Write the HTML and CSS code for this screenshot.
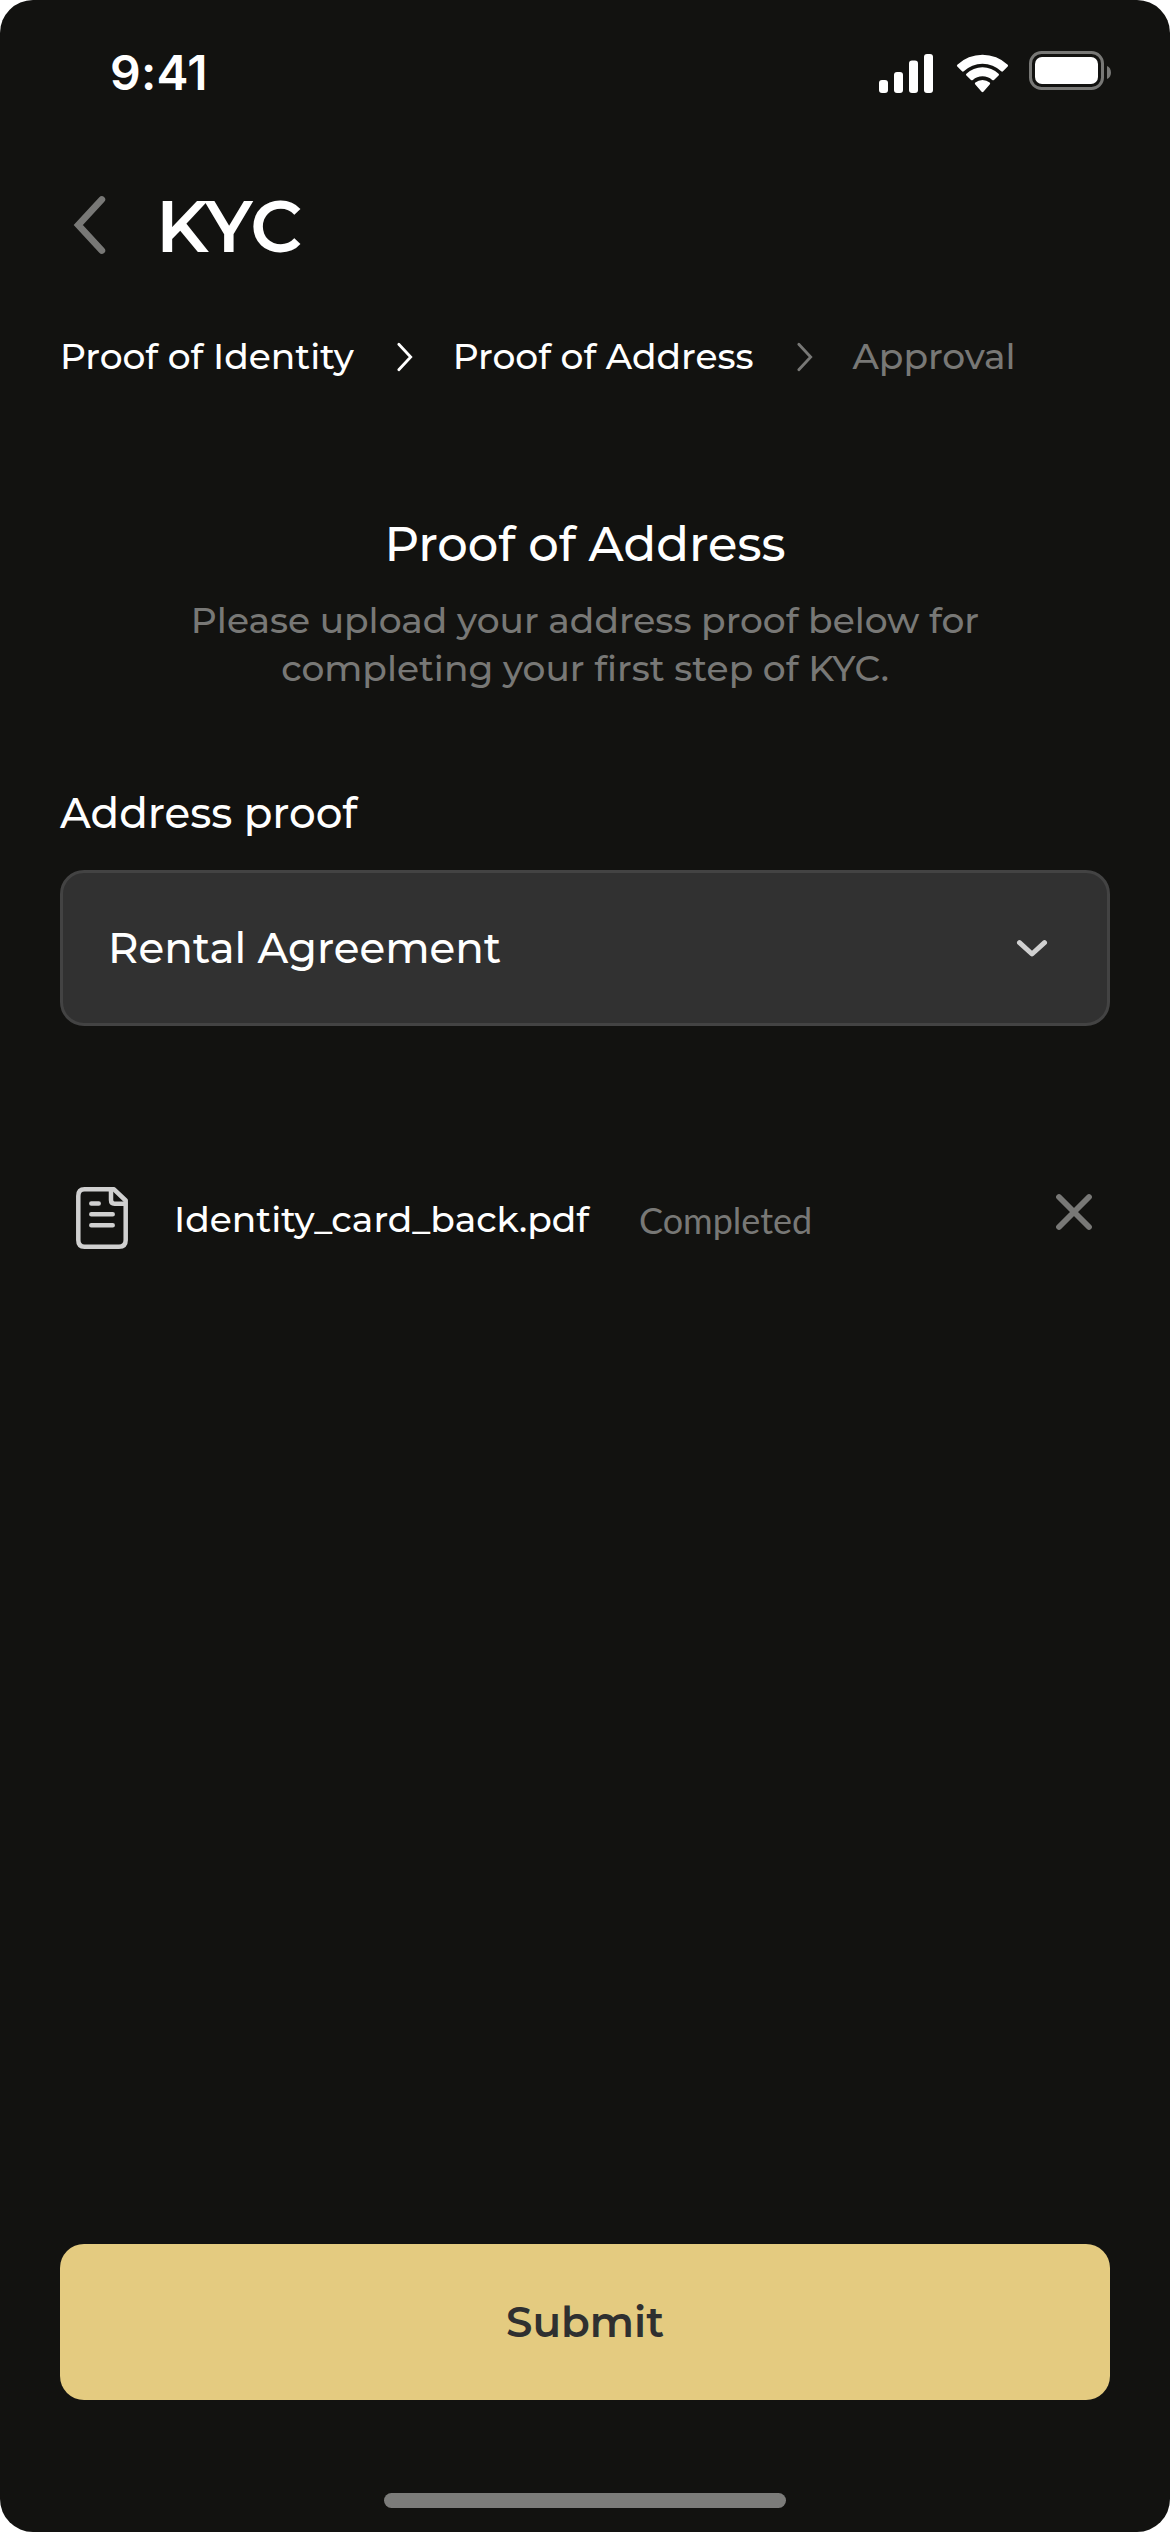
FILE: index.html
```html
<!DOCTYPE html>
<html lang="en">
<head>
<meta charset="utf-8">
<title>KYC</title>
<link rel="stylesheet" href="styles.css">
</head>
<body>
<div class="screen">
  <header class="status-bar">
    <span class="time">9:41</span>
    <svg class="status-icons" width="234" height="42" viewBox="878 50 234 42">
      <g fill="#fff">
        <rect x="879" y="80" width="9" height="13" rx="3"/>
        <rect x="894" y="72" width="9" height="21" rx="3"/>
        <rect x="909" y="60.500" width="9" height="32.500" rx="3"/>
        <rect x="924" y="54" width="9" height="39" rx="3"/>
        <rect x="1035" y="57" width="63" height="27" rx="7"/>
        <path d="M957.300 64.800a36.500 36.500 0 0 1 50.400 0q.9.900 0 1.800l-4.700 4.700q-.9.800-1.800 0a27 27 0 0 0-37.400 0q-.9.800-1.800 0l-4.700-4.700q-.9-.9 0-1.800z"/>
        <path d="M966.400 73.700a23.500 23.500 0 0 1 32.200 0q.9.900 0 1.800l-4.600 4.400q-.9.800-1.800 0a14.500 14.500 0 0 0-19.400 0q-.9.800-1.800 0l-4.600-4.400q-.9-.9 0-1.800z"/>
        <path d="M975.300 82.500a11.200 11.200 0 0 1 14.400 0q1 .9 0 1.900l-6.300 7.400q-.9.900-1.800 0l-6.300-7.400q-1-1 0-1.900z"/>
      </g>
      <rect x="1030.500" y="52.500" width="72" height="36" rx="11" fill="none" stroke="#787876" stroke-width="3"/>
      <path d="M1107 66v13c5.300-2 5.300-11 0-13z" fill="#787876"/>
    </svg>
  </header>

  <div class="title-bar">
    <svg class="back" width="32" height="60" viewBox="0 0 32 60"><path d="M28.800 3.500 5.300 29 28.800 54.500" fill="none" stroke="#787876" stroke-width="6.800" stroke-linecap="round"/></svg>
    <h1 class="title">KYC</h1>
  </div>

  <nav class="steps">
    <span class="step">Proof of Identity</span>
    <svg class="step-arrow" width="16" height="30" viewBox="0 0 16 30"><path d="M1.800 2.300 13.700 15 1.800 27.700"/></svg>
    <span class="step">Proof of Address</span>
    <svg class="step-arrow pending" width="16" height="30" viewBox="0 0 16 30"><path d="M1.800 2.300 13.700 15 1.800 27.700"/></svg>
    <span class="step pending">Approval</span>
  </nav>

  <main class="content">
    <section class="intro">
      <h2>Proof of Address</h2>
      <p>Please upload your address proof below for completing your first step of KYC.</p>
    </section>

    <div class="field">
      <span class="label">Address proof</span>
      <div class="select">
        <span>Rental Agreement</span>
        <svg width="32" height="20" viewBox="0 0 32 20"><path d="M3.500 4.700 16 16 28.500 4.700" fill="none" stroke="#d0d0d0" stroke-width="5" stroke-linecap="round" stroke-linejoin="round"/></svg>
      </div>
    </div>

    <div class="file">
      <svg class="file-icon" width="52" height="62" viewBox="0 0 52 62" fill="none" stroke="#d0d0d0" stroke-width="4.500" stroke-linecap="round" stroke-linejoin="round">
        <path d="M8.500 2.300H38L49.700 13.500V53q0 6.700-6.700 6.700H8.500q-6.200 0-6.200-6.700V9q0-6.700 6.200-6.700z"/>
        <path d="M35 3.500V13q0 3.700 3.500 3.700H49"/>
        <path d="M15.300 16.600h7.400M15.300 27.300h21.400M15.300 38.200h21.400"/>
      </svg>
      <span class="file-name">Identity_card_back.pdf</span>
      <span class="file-state">Completed</span>
      <svg class="remove" width="36" height="36" viewBox="0 0 36 36"><path d="M3 3 33 33M33 3 3 33" stroke="#787876" stroke-width="5.800" stroke-linecap="round"/></svg>
    </div>
  </main>

  <footer class="footer">
    <button class="submit" type="button">Submit</button>
    <div class="home-indicator"></div>
  </footer>
</div>
</body>
</html>
```
FILE: styles.css
```css
* { box-sizing: border-box; }

body {
  margin: 0;
  background: #fff;
  color: #fff;
  font: 500 36px/48px Montserrat, Inter, sans-serif;
}

h1, h2, p { margin: 0; }
svg { display: block; flex: none; overflow: visible; }

.screen {
  display: flex;
  flex-direction: column;
  height: 2532px;
  padding: 0 60px;
  border-radius: 33px;
  background: #121210;
}

.status-bar {
  display: flex;
  justify-content: space-between;
  align-items: flex-start;
  height: 182px;
  padding: 50px 0 0 50px;
  margin-right: -2px;
}

.time {
  font: 600 48px/46px Inter, sans-serif;
  letter-spacing: .3px;
}

.title-bar {
  display: flex;
  align-items: center;
  gap: 51px;
  height: 88px;
  padding-left: 13px;
}

.title { font-size: 72px; font-weight: 600; line-height: 88px; }

.steps {
  display: flex;
  align-items: center;
  margin-top: 62px;
  white-space: nowrap;
}

.step-arrow {
  margin: 2px 40px 0 43px;
  fill: none;
  stroke: #fff;
  stroke-width: 2.8;
  stroke-linecap: round;
}

.step.pending { color: #787876; }
.step-arrow.pending { stroke: #787876; }

.content { flex: 1; }

.intro {
  width: 840px;
  margin: 134px auto 0;
  text-align: center;
}

.intro h2 { font-size: 48px; font-weight: 500; line-height: 60px; }
.intro p { margin-top: 22px; color: #787876; }

.field { margin-top: 95px; font-size: 42px; line-height: 52px; }
.label { display: block; }

.select {
  display: flex;
  align-items: center;
  justify-content: space-between;
  height: 156px;
  margin-top: 31px;
  padding: 0 59px 0 45px;
  border: 3px solid #434343;
  border-radius: 24px;
  background: #313131;
}

.file {
  display: flex;
  align-items: center;
  height: 62px;
  margin-top: 161px;
  padding: 0 18px 0 16px;
}

.file-name { margin: 1px 0 0 46px; }

.file-state {
  margin: 4px auto 0 50px;
  color: #787876;
  font-family: Lato, sans-serif;
  font-weight: 400;
}

.remove { margin-bottom: 12px; }

.footer {
  display: flex;
  flex-direction: column;
  align-items: center;
  gap: 93px;
  padding-bottom: 24px;
}

.submit {
  width: 100%;
  height: 156px;
  border: 0;
  border-radius: 24px;
  background: #e4cb80;
  color: #2f3030;
  font: 600 42px/52px Montserrat, Inter, sans-serif;
}

.home-indicator {
  width: 402px;
  height: 15px;
  border-radius: 8px;
  background: #7c7c7a;
}
```
